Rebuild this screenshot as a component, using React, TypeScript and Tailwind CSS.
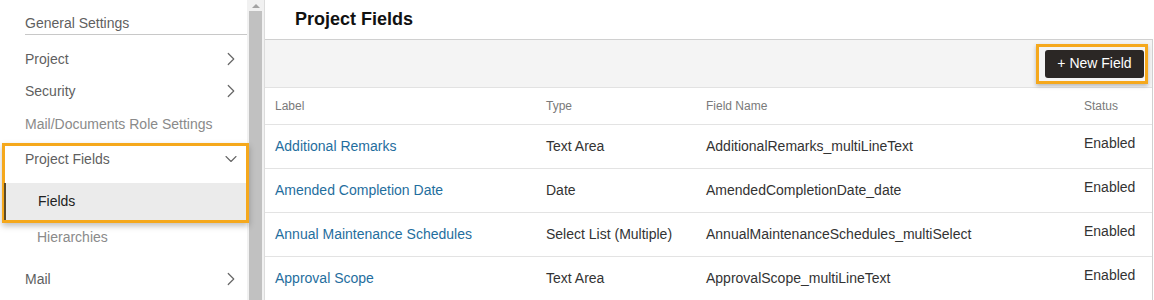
import { ChevronRight, ChevronDown } from "lucide-react";

const rows = [
  { label: "Additional Remarks", type: "Text Area", name: "AdditionalRemarks_multiLineText" },
  { label: "Amended Completion Date", type: "Date", name: "AmendedCompletionDate_date" },
  { label: "Annual Maintenance Schedules", type: "Select List (Multiple)", name: "AnnualMaintenanceSchedules_multiSelect" },
  { label: "Approval Scope", type: "Text Area", name: "ApprovalScope_multiLineText" },
];

function NavItem({ label, chevron }: { label: string; chevron?: boolean }) {
  return (
    <div className="h-[32px] flex items-center justify-between pl-[25px] pr-[5px] text-[#5f5f5f]">
      <span>{label}</span>
      {chevron && <ChevronRight size={22} strokeWidth={1.3} className="text-[#666]" />}
    </div>
  );
}

export default function App() {
  return (
    <div
      className="flex h-[300px] w-[1154px] overflow-hidden bg-white text-[14px]"
      style={{ fontFamily: '"Liberation Sans", Arial, sans-serif' }}
    >
      {/* sidebar */}
      <div className="w-[247px] shrink-0 pt-[13px]">
        <div className="ml-[25px] h-[22px] border-b border-[#c8c8c8] text-[#5f5f5f] leading-[20px]">
          General Settings
        </div>
        <div className="mt-[8px]">
          <NavItem label="Project" chevron />
          <NavItem label="Security" chevron />
          <div className="h-[35px] flex items-center pl-[25px] text-[#8a8a8a]">
            Mail/Documents Role Settings
          </div>
        </div>
        <div className="relative z-10 ml-[2px] mt-[1px] w-[247px] border-[3px] border-[#f5a81c] shadow-[0_3px_6px_rgba(0,0,0,0.25)]">
          <div className="h-[37px] flex items-start justify-between pt-[5px] pl-[20px] pr-[5px] leading-[16px] text-[#5f5f5f] bg-white">
            <span>Project Fields</span>
            <ChevronDown size={20} strokeWidth={1.3} className="text-[#666] -mt-[2px]" />
          </div>
          <div className="h-[37px] flex items-center pl-[32px] bg-[#ebebeb] text-[#222] border-l-2 border-[#5a4a2a] -ml-[1px]">
            Fields
          </div>
        </div>
        <div className="h-[34px] flex items-center pl-[37px] text-[#8a8a8a] -mt-[3px]">
          Hierarchies
        </div>
        <div className="mt-[9px]">
          <NavItem label="Mail" chevron />
        </div>
      </div>

      {/* scrollbar */}
      <div className="w-[18px] shrink-0 bg-[#f1f1f1] flex flex-col items-center border-r border-[#dcdcdc]">
        <div className="h-[11px] flex items-center justify-center">
          <div className="w-0 h-0 border-l-[4px] border-r-[4px] border-b-[4px] border-l-transparent border-r-transparent border-b-[#a3a3a3]" />
        </div>
        <div className="w-[13px] flex-1 bg-[#c1c1c1]" />
      </div>

      {/* main */}
      <div className="flex-1 flex flex-col pr-[1px]">
        <div className="h-[39px] shrink-0 flex items-center pl-[30px] text-[18px] font-bold text-[#111]">
          Project Fields
        </div>
        <div className="flex-1 border-r border-t border-[#d0d0d0]">
          <div className="h-[48px] bg-[#f4f4f4] border-b border-[#e2e2e2] flex items-center justify-end pr-[4px]">
            <div className="h-[40px] w-[112px] border-[3px] border-[#f5a81c] flex items-center justify-end pr-[1px] shadow-[0_2px_4px_rgba(0,0,0,0.25)]">
              <button className="h-[28px] w-[99px] rounded-[3px] bg-[#2b2725] text-white text-[14px]">
                + New Field
              </button>
            </div>
          </div>
          <div className="grid grid-cols-[271px_160px_378px_1fr] pl-[10px] h-[37px] items-center border-b border-[#e3e3e3] text-[12px] text-[#7a7a7a]">
            <div>Label</div>
            <div>Type</div>
            <div>Field Name</div>
            <div>Status</div>
          </div>
          {rows.map((r) => (
            <div
              key={r.name}
              className="grid grid-cols-[271px_160px_378px_1fr] pl-[10px] h-[44px] items-center border-b border-[#e3e3e3] text-[#333]"
            >
              <div className="text-[#1f6e9e]">{r.label}</div>
              <div>{r.type}</div>
              <div>{r.name}</div>
              <div className="self-start pt-[8px]">Enabled</div>
            </div>
          ))}
        </div>
      </div>
    </div>
  );
}
